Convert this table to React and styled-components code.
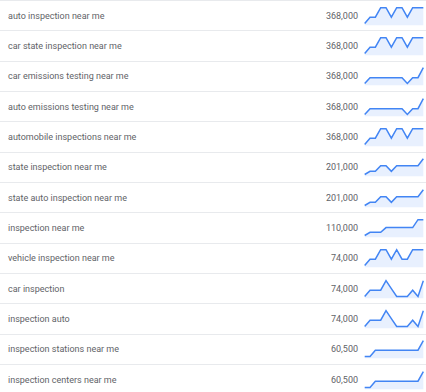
import React from "react";
import styled, { createGlobalStyle } from "styled-components";

const Global = createGlobalStyle`
  html, body { margin: 0; padding: 0; background: #fff; }
  body { font-family: Roboto, "Noto Sans", Arial, sans-serif; }
`;

const Table = styled.div`
  width: 426px;
  display: flex;
  flex-direction: column;
`;

const Row = styled.div`
  display: flex;
  align-items: center;
  height: 30.33px;
  box-sizing: border-box;
  border-top: 1px solid #e8eaed;
  padding: 0 2px 0 8px;
`;

const Keyword = styled.div`
  flex: 1;
  font-size: 9px;
  color: #5f6368;
  white-space: nowrap;
`;

const Volume = styled.div`
  font-size: 9px;
  color: #5f6368;
  text-align: right;
`;

const Chart = styled.svg`
  display: block;
  width: 60px;
  height: 20px;
  margin-left: 6px;
  flex: none;
  overflow: hidden;
`;

const A = [0, 0.4, 0.4, 1, 1, 0.4, 1, 1, 0.4, 1, 1, 1];
const B = [0, 0.37, 0.37, 0.37, 0.37, 0.37, 0.37, 0.37, 0, 0.37, 0.37, 1];
const C = [0, 0.2, 0.2, 0.56, 0.56, 0.2, 0.56, 0.56, 0.56, 0.56, 0.56, 1];
const D = [0, 0.2, 0.2, 0.2, 0.5, 0.5, 0.5, 0.5, 0.5, 0.5, 1, 1];
const E = [0, 0.4, 0.4, 1, 1, 0.4, 1, 0.4, 0.4, 1, 1, 1];
const F = [0, 0.4, 0.4, 0.4, 1, 0.5, 0, 0, 0, 0.4, 0, 1];
const G = [0, 0, 0.4, 0.4, 0.4, 0.4, 0.4, 0.4, 0.4, 0.4, 0.4, 1];

const rows = [
  ["auto inspection near me", "368,000", A],
  ["car state inspection near me", "368,000", A],
  ["car emissions testing near me", "368,000", B],
  ["auto emissions testing near me", "368,000", B],
  ["automobile inspections near me", "368,000", A],
  ["state inspection near me", "201,000", C],
  ["state auto inspection near me", "201,000", C],
  ["inspection near me", "110,000", D],
  ["vehicle inspection near me", "74,000", E],
  ["car inspection", "74,000", F],
  ["inspection auto", "74,000", F],
  ["inspection stations near me", "60,500", G],
  ["inspection centers near me", "60,500", G],
];

function Sparkline({ data }) {
  const pts = data.map((v, i) => [0.7 + i * 5.33, 17.5 - v * 15.8]);
  const line = pts.map((p) => p.join(",")).join(" ");
  const last = pts[pts.length - 1];
  const area = `${pts[0][0]},19.2 ${line} ${last[0]},19.2`;
  return (
    <Chart viewBox="0 0 60 20">
      <polygon points={area} fill="#e8f0fe" />
      <polyline
        points={line}
        fill="none"
        stroke="#4285f4"
        strokeWidth="1.5"
        strokeLinejoin="miter"
      />
    </Chart>
  );
}

export default function App() {
  return (
    <>
      <Global />
      <Table>
        {rows.map(([k, v, d]) => (
          <Row key={k}>
            <Keyword>{k}</Keyword>
            <Volume>{v}</Volume>
            <Sparkline data={d} />
          </Row>
        ))}
      </Table>
    </>
  );
}
